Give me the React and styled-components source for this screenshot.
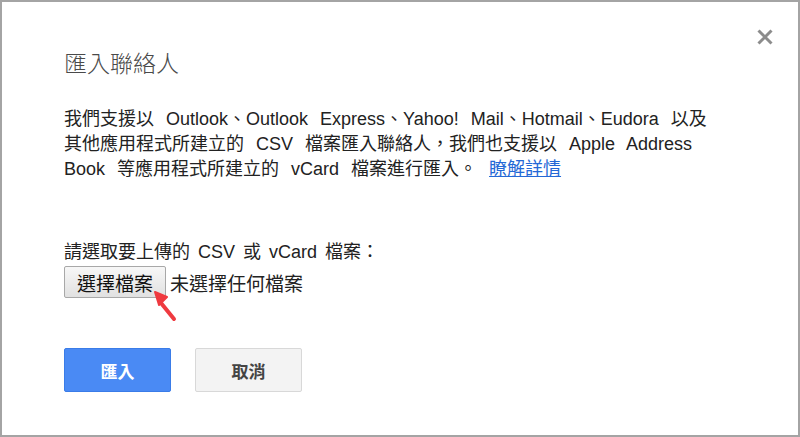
import React from "react";
import styled, { createGlobalStyle } from "styled-components";

const GlobalStyle = createGlobalStyle`
  html, body { margin: 0; padding: 0; background: #fff; }
  * { box-sizing: border-box; }
`;

const CJK = `"Liberation Sans", Arial, "Noto Sans CJK TC", sans-serif`;

const Frame = styled.div`
  position: relative;
  width: 800px;
  height: 437px;
  border: 2px solid #a4a4a4;
  background: #fff;
  padding: 46px 0 0 62px;
  font-family: ${CJK};
  color: #222;
`;

const CloseButton = styled.button`
  position: absolute;
  top: 25px;
  right: 23px;
  width: 20px;
  height: 20px;
  padding: 0;
  border: none;
  background: transparent;
  cursor: pointer;
  display: flex;
  align-items: center;
  justify-content: center;
`;

const Title = styled.h1`
  margin: 0;
  font-family: ${CJK};
  font-size: 23px;
  line-height: 32px;
  font-weight: 300;
  color: #4a4a4a;
`;

const Description = styled.p`
  margin: 27px 0 0;
  font-size: 18px;
  line-height: 25px;
  word-spacing: 7px;
  white-space: nowrap;
`;

const Link = styled.a`
  color: #2468d6;
  text-decoration: underline;
  word-spacing: 0;
  cursor: pointer;
`;

const Label = styled.div`
  margin-top: 58px;
  font-size: 18px;
  line-height: 25px;
  word-spacing: 3px;
`;

const FileRow = styled.div`
  position: relative;
  display: flex;
  align-items: center;
  gap: 4px;
  height: 32px;
  margin-top: 1px;
  font-size: 19px;
`;

const FileButton = styled.button`
  height: 32px;
  padding: 0 12px;
  font-family: ${CJK};
  font-size: 19px;
  color: #111;
  border: 1px solid #a8a8a8;
  border-radius: 2px;
  background: linear-gradient(#f7f7f7, #e1e1e1);
  cursor: pointer;
`;

const FileStatus = styled.span`
  font-size: 19px;
  color: #222;
`;

const Pointer = styled.svg`
  position: absolute;
  left: 89px;
  top: 25px;
  overflow: visible;
`;

const Actions = styled.div`
  display: flex;
  gap: 24px;
  margin-top: 50px;
`;

const ActionButton = styled.button`
  width: 107px;
  height: 44px;
  border-radius: 2px;
  font-family: ${CJK};
  font-size: 17px;
  font-weight: 700;
  cursor: pointer;
  border: 1px solid ${(p) => (p.$primary ? "#3a7ce8" : "#d8d8d8")};
  background: ${(p) => (p.$primary ? "#4a8af4" : "#f3f3f3")};
  color: ${(p) => (p.$primary ? "#fff" : "#444")};
`;

export default function App() {
  return (
    <>
      <GlobalStyle />
      <Frame>
        <CloseButton aria-label="close">
          <svg width="16" height="16" viewBox="0 0 16 16">
            <path d="M1.5 1.5 L14.5 14.5 M14.5 1.5 L1.5 14.5" stroke="#8c8c8c" strokeWidth="3" />
          </svg>
        </CloseButton>
        <Title>匯入聯絡人</Title>
        <Description>
          我們支援以 Outlook、Outlook Express、Yahoo! Mail、Hotmail、Eudora 以及
          <br />
          其他應用程式所建立的 CSV 檔案匯入聯絡人，我們也支援以 Apple Address
          <br />
          Book 等應用程式所建立的 vCard 檔案進行匯入。 <Link>瞭解詳情</Link>
        </Description>
        <Label>請選取要上傳的 CSV 或 vCard 檔案：</Label>
        <FileRow>
          <FileButton>選擇檔案</FileButton>
          <FileStatus>未選擇任何檔案</FileStatus>
          <Pointer width="24" height="30" viewBox="0 0 24 30">
            <path d="M21 28 L8 12" stroke="#ef3a40" strokeWidth="4" strokeLinecap="round" />
            <path d="M2 1 L14 6 L6 14 Z" fill="#ef3a40" stroke="#ef3a40" strokeWidth="2" strokeLinejoin="round" />
          </Pointer>
        </FileRow>
        <Actions>
          <ActionButton $primary>匯入</ActionButton>
          <ActionButton>取消</ActionButton>
        </Actions>
      </Frame>
    </>
  );
}
